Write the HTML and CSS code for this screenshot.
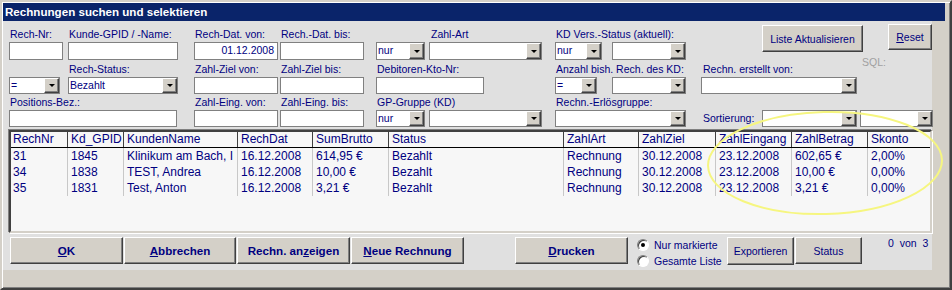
FILE: index.html
```html
<!DOCTYPE html>
<html lang="de">
<head>
    <meta charset="UTF-8">
    <title>Rechnungen suchen und selektieren</title>
    <link rel="stylesheet" href="styles.css">
</head>
<body>
    <div class="window">
        <div class="titlebar">Rechnungen suchen und selektieren</div>
        <div class="form">
            <div class="filters">
                <!-- Zeile 1 -->
                <label class="lbl c1 r1">Rech-Nr:</label>
                <label class="lbl c2 r1">Kunde-GPID / -Name:</label>
                <label class="lbl c3 r1">Rech-Dat. von:</label>
                <label class="lbl c4 r1">Rech.-Dat. bis:</label>
                <label class="lbl c6 r1 ind">Zahl-Art</label>
                <label class="lbl c7 r1">KD Vers.-Status (aktuell):</label>
                <div class="btn btn-refresh c10">Liste Aktualisieren</div>
                <div class="btn btn-reset c11"><u>R</u>eset</div>

                <div class="txt c1 r2 w54"></div>
                <div class="txt c2 r2 w110"></div>
                <div class="txt c3 r2 w84 right">01.12.2008</div>
                <div class="txt c4 r2 w84"></div>
                <div class="combo c5 r2 w49"><span class="val">nur</span><span class="drop"></span></div>
                <div class="combo c6 r2 w113"><span class="val"></span><span class="drop"></span></div>
                <div class="combo c7 r2 w47"><span class="val">nur</span><span class="drop"></span></div>
                <div class="combo c8 r2 w74"><span class="val"></span><span class="drop"></span></div>

                <!-- Zeile 2 -->
                <label class="lbl c2 r3">Rech-Status:</label>
                <label class="lbl c3 r3">Zahl-Ziel von:</label>
                <label class="lbl c4 r3">Zahl-Ziel bis:</label>
                <label class="lbl c5 r3">Debitoren-Kto-Nr:</label>
                <label class="lbl c7 r3">Anzahl bish. Rech. des KD:</label>
                <label class="lbl c9 r3 ind">Rechn. erstellt von:</label>
                <span class="sql c11 r3">SQL:</span>

                <div class="combo c1 r4 w51"><span class="val">=</span><span class="drop"></span></div>
                <div class="combo c2 r4 w110"><span class="val">Bezahlt</span><span class="drop"></span></div>
                <div class="txt c3 r4 w84"></div>
                <div class="txt c4 r4 w84"></div>
                <div class="txt c5 s2 r4 w108"></div>
                <div class="combo c7 r4 w42"><span class="val">=</span><span class="drop"></span></div>
                <div class="combo c8 r4 w74"><span class="val"></span><span class="drop"></span></div>
                <div class="combo c9 s2 r4 w156"><span class="val"></span><span class="drop"></span></div>

                <!-- Zeile 3 -->
                <label class="lbl c1 s2 r5">Positions-Bez.:</label>
                <label class="lbl c3 r5">Zahl-Eing. von:</label>
                <label class="lbl c4 r5">Zahl-Eing. bis:</label>
                <label class="lbl c5 s2 r5">GP-Gruppe (KD)</label>
                <label class="lbl c7 s2 r5">Rechn.-Erlösgruppe:</label>

                <div class="txt c1 s2 r6 w168"></div>
                <div class="txt c3 r6 w84"></div>
                <div class="txt c4 r6 w84"></div>
                <div class="combo c5 r6 w49"><span class="val">nur</span><span class="drop"></span></div>
                <div class="combo c6 r6 w113"><span class="val"></span><span class="drop"></span></div>
                <div class="combo c7 s2 r6 w131"><span class="val"></span><span class="drop"></span></div>
                <label class="lbl lbl-mid c9 r6 ind">Sortierung:</label>
                <div class="combo c10 r6 w95"><span class="val"></span><span class="drop"></span></div>
                <div class="combo c11 r6 w73"><span class="val"></span><span class="drop"></span></div>
            </div>

            <div class="list">
                <div class="row head">
                    <span>RechNr</span><span>Kd_GPID</span><span>KundenName</span><span>RechDat</span><span>SumBrutto</span><span>Status</span><span>ZahlArt</span><span>ZahlZiel</span><span>ZahlEingang</span><span>ZahlBetrag</span><span>Skonto</span>
                </div>
                <div class="row">
                    <span>31</span><span>1845</span><span>Klinikum am Bach, I</span><span>16.12.2008</span><span>614,95 €</span><span>Bezahlt</span><span>Rechnung</span><span>30.12.2008</span><span>23.12.2008</span><span>602,65 €</span><span>2,00%</span>
                </div>
                <div class="row">
                    <span>34</span><span>1838</span><span>TEST, Andrea</span><span>16.12.2008</span><span>10,00 €</span><span>Bezahlt</span><span>Rechnung</span><span>30.12.2008</span><span>23.12.2008</span><span>10,00 €</span><span>0,00%</span>
                </div>
                <div class="row">
                    <span>35</span><span>1831</span><span>Test, Anton</span><span>16.12.2008</span><span>3,21 €</span><span>Bezahlt</span><span>Rechnung</span><span>30.12.2008</span><span>23.12.2008</span><span>3,21 €</span><span>0,00%</span>
                </div>
            </div>

            <div class="actions">
                <div class="btn bold w113"><u>O</u>K</div>
                <div class="btn bold w112 gap1"><u>A</u>bbrechen</div>
                <div class="btn bold w113 gap1">Rechn. an<u>z</u>eigen</div>
                <div class="btn bold w113 gap1"><u>N</u>eue Rechnung</div>
                <div class="btn bold w113 gap-print"><u>D</u>rucken</div>
                <div class="options">
                    <div class="opt"><span class="radio checked"></span>Nur markierte</div>
                    <div class="opt"><span class="radio"></span>Gesamte Liste</div>
                </div>
                <div class="btn btn-tall w67">Exportieren</div>
                <div class="btn w67 gap1">Status</div>
                <div class="count">0 von 3</div>
            </div>
        </div>
    </div>

    <svg class="marker" width="952" height="290" viewBox="0 0 952 290">
        <ellipse cx="825" cy="163" rx="117" ry="51" transform="rotate(-1.5 825 163)"></ellipse>
    </svg>
</body>
</html>
```

FILE: styles.css
```css
body {
    margin: 0;
    background-color: #d4d0c8;
    font-family: "Liberation Sans", Arial, sans-serif;
    font-size: 10.5px;
    color: #000080;
}

.window {
    width: 952px;
    height: 290px;
    box-sizing: border-box;
    border-style: solid;
    border-width: 2px;
    border-color: #d4d0c8 #404040 #404040 #d4d0c8;
    box-shadow: inset 1px 1px #ffffff, inset -1px -1px #808080;
    padding: 1px 3px 2px 1px;
}

.titlebar {
    height: 18px;
    margin-right: 2px;
    padding-left: 2px;
    background-color: #0a246a;
    color: #ffffff;
    font-size: 11.6px;
    font-weight: bold;
    line-height: 18px;
}

.form {
    width: 929px;
    height: 249px;
    box-sizing: border-box;
    padding: 7px 0 0 6px;
    background-color: #e0e0e0;
}

/* Filterbereich */
.filters {
    display: grid;
    grid-template-columns: 59px 126px 86px 96px 53px 126px 57px 89px 61px 98px 73px;
    grid-template-rows: 14px 18px 17px 17px 16px 17px;
    justify-items: start;
}

.c1 { grid-column-start: 1; }
.c2 { grid-column-start: 2; }
.c3 { grid-column-start: 3; }
.c4 { grid-column-start: 4; }
.c5 { grid-column-start: 5; }
.c6 { grid-column-start: 6; }
.c7 { grid-column-start: 7; }
.c8 { grid-column-start: 8; }
.c9 { grid-column-start: 9; }
.c10 { grid-column-start: 10; }
.c11 { grid-column-start: 11; }
.s2 { grid-column-end: span 2; }

.r1 { grid-row: 1; }
.r2 { grid-row: 2; }
.r3 { grid-row: 3; }
.r4 { grid-row: 4; }
.r5 { grid-row: 5; }
.r6 { grid-row: 6; }

.w42 { width: 42px; }
.w47 { width: 47px; }
.w49 { width: 49px; }
.w51 { width: 51px; }
.w54 { width: 54px; }
.w67 { width: 67px; }
.w73 { width: 73px; }
.w74 { width: 74px; }
.w84 { width: 84px; }
.w95 { width: 95px; }
.w108 { width: 108px; }
.w110 { width: 110px; }
.w112 { width: 112px; }
.w113 { width: 113px; }
.w131 { width: 131px; }
.w156 { width: 156px; }
.w168 { width: 168px; }

.lbl {
    align-self: end;
    margin-bottom: 1px;
    padding-left: 1px;
    line-height: 13px;
    white-space: nowrap;
}

.lbl.ind {
    padding-left: 2px;
}

.lbl-mid {
    align-self: center;
    margin-bottom: 0;
}

.sql {
    align-self: start;
    margin-top: -4px;
    padding-left: 2px;
    line-height: 13px;
    color: #a0a0a0;
}

.txt {
    box-sizing: border-box;
    border: 1px solid #808080;
    background-color: #ffffff;
    padding: 0 3px 0 2px;
    line-height: 15px;
    white-space: nowrap;
}

.txt.right {
    text-align: right;
}

.combo {
    display: flex;
    box-sizing: border-box;
    border: 1px solid #808080;
    background-color: #ffffff;
}

.combo .val {
    flex: 1;
    padding-left: 1px;
    line-height: 15px;
    white-space: nowrap;
    overflow: hidden;
}

.combo .drop {
    width: 15px;
    box-sizing: border-box;
    border: 1px solid;
    border-color: #ffffff #404040 #404040 #ffffff;
    box-shadow: inset -1px -1px #808080;
    background-color: #d4d0c8;
    display: flex;
    align-items: center;
    justify-content: center;
}

.combo .drop::after {
    content: "";
    border-top: 3px solid #000000;
    border-left: 3px solid transparent;
    border-right: 3px solid transparent;
}

/* Schaltflaechen */
.btn {
    box-sizing: border-box;
    height: 27px;
    display: flex;
    align-items: center;
    justify-content: center;
    border: 1px solid;
    border-color: #ffffff #404040 #404040 #ffffff;
    box-shadow: inset -1px -1px #808080;
    background-color: #d4d0c8;
    color: #000080;
    white-space: nowrap;
}

.btn.bold {
    font-size: 11.6px;
    font-weight: bold;
}

.btn-refresh {
    grid-row: 1 / 3;
    align-self: start;
    width: 101px;
    margin-top: -3px;
}

.btn-reset {
    grid-row: 1 / 3;
    align-self: start;
    width: 44px;
    height: 26px;
    margin-top: -4px;
    margin-left: 28px;
}

.btn-tall {
    height: 28px;
}

/* Liste */
.list {
    width: 923px;
    height: 103px;
    margin-top: 3px;
    box-sizing: border-box;
    border: 2px solid;
    border-color: #404040 #d4d0c8 #d4d0c8 #404040;
    box-shadow: -1px -1px #808080, 1px 1px #ffffff;
    background-color: #f7f7f7;
    font-size: 12px;
}

.row {
    display: grid;
    grid-template-columns: 57px 56px 114px 75px 76px 175px 75px 77px 76px 76px 1fr;
    height: 16px;
    line-height: 16px;
}

.row span {
    padding-left: 3px;
    border-right: 1px solid #c8c8c8;
    white-space: nowrap;
    overflow: hidden;
}

.row span:first-child {
    padding-left: 2px;
}

.row span:last-child {
    border-right: none;
}

.head {
    height: 15px;
    line-height: 14px;
    border-bottom: 1px solid #000000;
}

.head span {
    border-right-color: #404040;
}

/* untere Leiste */
.actions {
    display: flex;
    align-items: flex-start;
    margin: 4px 0 0 1px;
}

.gap1 {
    margin-left: 1px;
}

.gap-print {
    margin-left: 51px;
}

.options {
    width: 90px;
    margin-left: 9px;
    margin-top: 0;
}

.opt {
    display: flex;
    align-items: center;
    height: 16px;
    white-space: nowrap;
}

.radio {
    width: 12px;
    height: 12px;
    box-sizing: border-box;
    margin-right: 5px;
    border: 1px solid;
    border-color: #808080 #ffffff #ffffff #808080;
    border-radius: 50%;
    box-shadow: inset 1px 1px #404040;
    background-color: #ffffff;
    display: flex;
    align-items: center;
    justify-content: center;
}

.radio.checked::after {
    content: "";
    width: 4px;
    height: 4px;
    border-radius: 50%;
    background-color: #000000;
}

.count {
    margin-left: 26px;
    line-height: 12px;
    word-spacing: 3px;
}

.marker {
    position: absolute;
    top: 0;
    left: 0;
    pointer-events: none;
}

.marker ellipse {
    fill: none;
    stroke: #f6f680;
    stroke-width: 2;
}
```
